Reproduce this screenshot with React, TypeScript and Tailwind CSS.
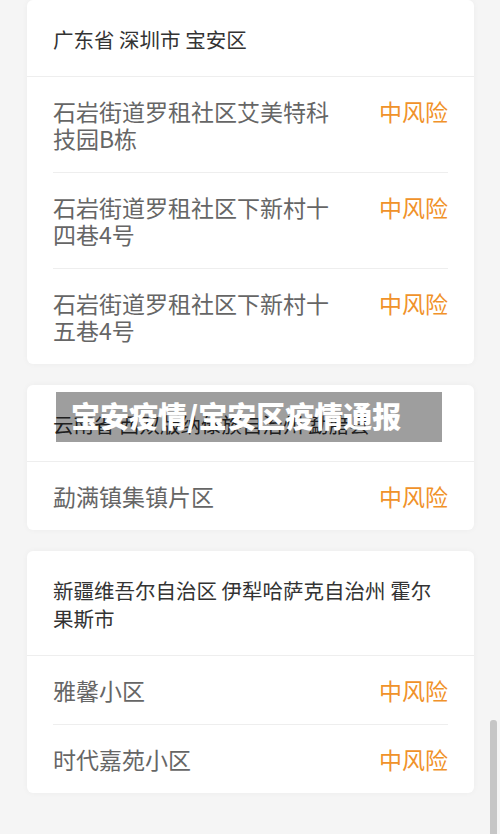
import React from "react";

type Item = { name: string; risk: string };
type Group = { region: string; items: Item[] };

const groups: Group[] = [
  {
    region: "广东省 深圳市 宝安区",
    items: [
      { name: "石岩街道罗租社区艾美特科技园B栋", risk: "中风险" },
      { name: "石岩街道罗租社区下新村十四巷4号", risk: "中风险" },
      { name: "石岩街道罗租社区下新村十五巷4号", risk: "中风险" },
    ],
  },
  {
    region: "云南省 西双版纳傣族自治州 勐腊县",
    items: [{ name: "勐满镇集镇片区", risk: "中风险" }],
  },
  {
    region: "新疆维吾尔自治区 伊犁哈萨克自治州 霍尔果斯市",
    items: [
      { name: "雅馨小区", risk: "中风险" },
      { name: "时代嘉苑小区", risk: "中风险" },
    ],
  },
];

const font = { fontFamily: '"Noto Sans CJK SC", "Noto Sans", sans-serif' };

export default function App() {
  return (
    <div
      className="relative h-[834px] w-[500px] overflow-hidden bg-[#f5f5f5]"
      style={font}
    >
      <div className="flex flex-col gap-[21px] pl-[27px] pr-[26px]">
        {groups.map((g, gi) => (
          <div
            key={gi}
            className="rounded-[6px] bg-white shadow-[0_0_6px_rgba(0,0,0,0.04)]"
          >
            <div className="border-b border-[#eeeeee] px-[26px] pt-[25px] pb-[23px] text-[20.5px] leading-[28px] text-[#333333]">
              {g.region}
            </div>
            <div className="px-[26px]">
              {g.items.map((it, ii) => (
                <div
                  key={ii}
                  className={
                    "flex items-start justify-between pt-[21px] pb-[20px] " +
                    (ii < g.items.length - 1 ? "border-b border-[#eeeeee]" : "")
                  }
                >
                  <div className="mr-[40px] flex-1 text-[23px] leading-[27px] text-[#666666]">
                    {it.name}
                  </div>
                  <div className="shrink-0 text-[23px] leading-[27px] text-[#f0922a]">
                    {it.risk}
                  </div>
                </div>
              ))}
            </div>
          </div>
        ))}
      </div>

      <div className="absolute left-[56px] top-[392px] flex h-[50px] w-[386px] items-center bg-[rgba(0,0,0,0.38)] pl-[15px] pb-[4px]">
        <span className="text-[29px] font-black leading-none text-white">
          宝安疫情/宝安区疫情通报
        </span>
      </div>

      <div className="absolute right-[3px] top-[720px] h-[120px] w-[7px] rounded-t-[3px] bg-[#c6c6c6]" />
    </div>
  );
}
